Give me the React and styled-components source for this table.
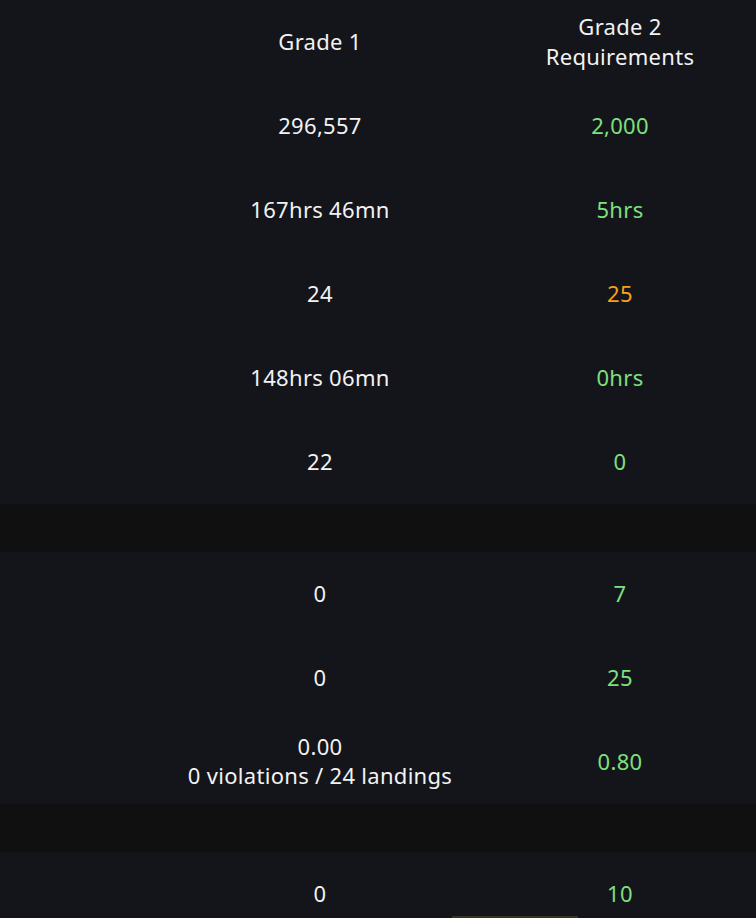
import React from 'react';
import styled, { createGlobalStyle } from 'styled-components';

const GlobalStyle = createGlobalStyle`
    html, body {
        margin: 0;
        padding: 0;
        background: #14151a;
    }
    body {
        font-family: "Noto Sans", "Open Sans", sans-serif;
        color: #f2f2f2;
        overflow: hidden;
    }
`;

const COLORS = {
    plain: '#f2f2f2',
    ok: '#7ee07e',
    warn: '#f7a21b'
};

const Table = styled.div`
    position: relative;
    width: 756px;
    height: 918px;
    overflow: hidden;
    background: #14151a;
`;

const Row = styled.div`
    display: grid;
    grid-template-columns: 156px 328px 1fr;
    height: ${p => p.$height || 84}px;
    align-items: center;
    background: ${p => p.$band ? '#101010' : '#14151a'};
`;

const Cell = styled.div`
    text-align: center;
    font-size: 22px;
    line-height: 29px;
    letter-spacing: 0.3px;
    padding-bottom: 2px;
    color: ${p => COLORS[p.$tone || 'plain']};
`;

const HeadCell = styled(Cell)`
    line-height: 30px;
`;

const Edge = styled.div`
    position: absolute;
    left: 452px;
    top: 916px;
    width: 126px;
    height: 2px;
    background: #3b3122;
`;

const rows = [
    { a: '296,557', b: '2,000', tone: 'ok' },
    { a: '167hrs 46mn', b: '5hrs', tone: 'ok' },
    { a: '24', b: '25', tone: 'warn' },
    { a: '148hrs 06mn', b: '0hrs', tone: 'ok' },
    { a: '22', b: '0', tone: 'ok' },
    { band: true },
    { a: '0', b: '7', tone: 'ok' },
    { a: '0', b: '25', tone: 'ok' },
    { a: ['0.00', '0 violations / 24 landings'], b: '0.80', tone: 'ok' },
    { band: true },
    { a: '0', b: '10', tone: 'ok' }
];

export default function App() {
    return (
        <>
            <GlobalStyle />
            <Table>
                <Row>
                    <div />
                    <HeadCell>Grade 1</HeadCell>
                    <HeadCell>Grade 2<br />Requirements</HeadCell>
                </Row>
                {rows.map((r, i) => r.band
                    ? <Row key={i} $band $height={48} />
                    : <Row key={i}>
                        <div />
                        <Cell>
                            {Array.isArray(r.a)
                                ? r.a.map((line, j) => <div key={j}>{line}</div>)
                                : r.a}
                        </Cell>
                        <Cell $tone={r.tone}>{r.b}</Cell>
                    </Row>
                )}
                <Edge />
            </Table>
        </>
    );
}
